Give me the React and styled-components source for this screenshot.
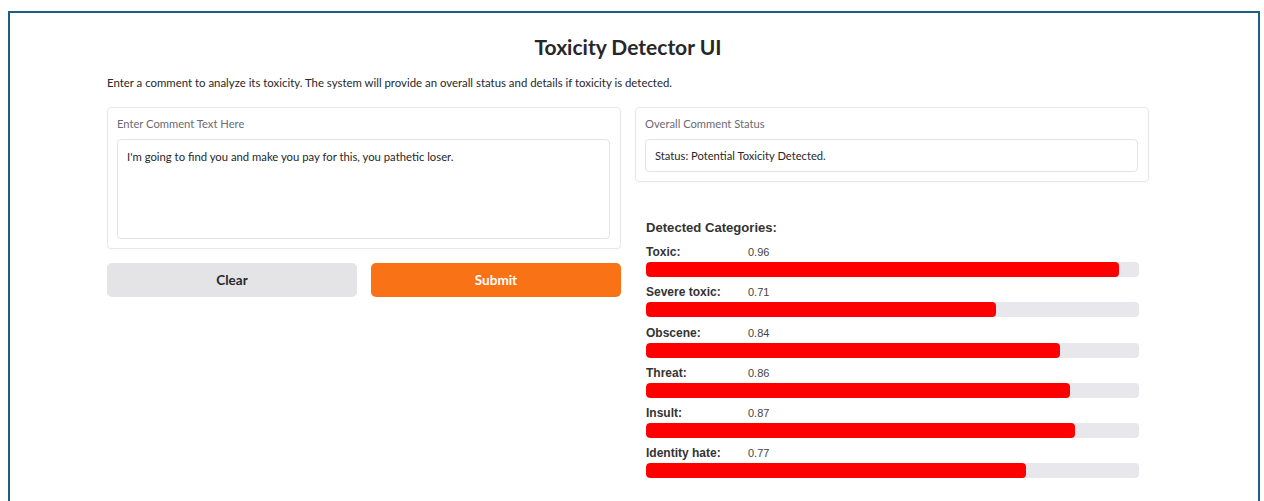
import React from "react";
import styled, { createGlobalStyle } from "styled-components";

const categories = [
  { name: "Toxic", score: 0.96 },
  { name: "Severe toxic", score: 0.71 },
  { name: "Obscene", score: 0.84 },
  { name: "Threat", score: 0.86 },
  { name: "Insult", score: 0.87 },
  { name: "Identity hate", score: 0.77 },
];

const GlobalStyle = createGlobalStyle`
  html, body {
    margin: 0;
    background: #ffffff;
  }
  body {
    font-family: "Source Sans Pro", Lato, "Noto Sans", sans-serif;
    color: #27272a;
    overflow: hidden;
  }
`;

export default function App() {
  return (
    <>
      <GlobalStyle />
      <Frame>
        <Content>
          <Title>Toxicity Detector UI</Title>
          <Intro>
            Enter a comment to analyze its toxicity. The system will provide an overall status and details if toxicity is detected.
          </Intro>
          <Columns>
            <Column>
              <Card>
                <FieldLabel>Enter Comment Text Here</FieldLabel>
                <CommentBox
                  defaultValue="I'm going to find you and make you pay for this, you pathetic loser."
                />
              </Card>
              <ButtonRow>
                <Button>Clear</Button>
                <Button primary>Submit</Button>
              </ButtonRow>
            </Column>
            <Column>
              <Card>
                <FieldLabel>Overall Comment Status</FieldLabel>
                <StatusBox>Status: Potential Toxicity Detected.</StatusBox>
              </Card>
              <Results>
                <ResultsTitle>Detected Categories:</ResultsTitle>
                {categories.map((c) => (
                  <Category key={c.name}>
                    <CategoryHead>
                      <CategoryName>{c.name}:</CategoryName>
                      <CategoryScore>{c.score.toFixed(2)}</CategoryScore>
                    </CategoryHead>
                    <Track>
                      <Fill style={{ width: `${c.score * 100}%` }} />
                    </Track>
                  </Category>
                ))}
              </Results>
            </Column>
          </Columns>
        </Content>
      </Frame>
    </>
  );
}

const Frame = styled.div`
  margin: 11px 0 0 8px;
  width: 1252px;
  min-height: 540px;
  border: 2px solid #1c5f85;
  box-sizing: border-box;
  padding: 22px 0 0 97px;
`;

const Content = styled.div`
  width: 1042px;
`;

const Title = styled.h1`
  margin: 0;
  text-align: center;
  font-size: 21px;
  line-height: 24px;
  font-weight: 700;
  color: #27272a;
`;

const Intro = styled.p`
  margin: 16px 0 0;
  font-size: 11.4px;
  line-height: 16px;
  color: #27272a;
`;

const Columns = styled.div`
  display: grid;
  grid-template-columns: 1fr 1fr;
  gap: 14px;
  margin-top: 16px;
  align-items: start;
`;

const Column = styled.div`
  display: flex;
  flex-direction: column;
`;

const Card = styled.div`
  border: 1px solid #e7e7ea;
  border-radius: 4px;
  padding: 9px 10px 9px 9px;
  display: flex;
  flex-direction: column;
  gap: 8px;
  box-shadow: 0 1px 2px rgba(0, 0, 0, 0.03);
`;

const FieldLabel = styled.div`
  font-size: 11.2px;
  line-height: 14px;
  color: #6b6b74;
`;

const CommentBox = styled.textarea`
  box-sizing: border-box;
  height: 100px;
  resize: none;
  border: 1px solid #e4e4e7;
  border-radius: 4px;
  padding: 9px 9px;
  font-family: inherit;
  font-size: 11.3px;
  line-height: 16px;
  color: #27272a;
  outline: none;
`;

const StatusBox = styled.div`
  box-sizing: border-box;
  height: 33px;
  display: flex;
  align-items: center;
  border: 1px solid #e4e4e7;
  border-radius: 4px;
  padding: 0 9px;
  font-size: 11.2px;
  color: #27272a;
`;

const ButtonRow = styled.div`
  display: grid;
  grid-template-columns: 1fr 1fr;
  gap: 14px;
  margin-top: 14px;
`;

const Button = styled.button`
  height: 34px;
  border: none;
  border-radius: 5px;
  font-family: inherit;
  font-size: 13.5px;
  font-weight: 700;
  background: ${(p) => (p.primary ? "#f97316" : "#e4e4e7")};
  color: ${(p) => (p.primary ? "#ffffff" : "#27272a")};
`;

const Results = styled.div`
  padding: 37px 10px 0 11px;
  font-family: "Liberation Sans", Arial, sans-serif;
`;

const ResultsTitle = styled.div`
  font-size: 13.1px;
  line-height: 18px;
  font-weight: 700;
  color: #333;
  margin-bottom: 8px;
`;

const Category = styled.div`
  display: flex;
  flex-direction: column;
  gap: 3px;
  & + & {
    margin-top: 8.25px;
  }
`;

const CategoryHead = styled.div`
  display: flex;
  align-items: baseline;
  height: 14px;
  line-height: 14px;
`;

const CategoryName = styled.span`
  width: 102px;
  font-size: 12px;
  font-weight: 700;
  color: #333;
`;

const CategoryScore = styled.span`
  font-size: 11px;
  color: #444;
`;

const Track = styled.div`
  height: 15px;
  border-radius: 4px;
  background: #e8e8ec;
  overflow: hidden;
`;

const Fill = styled.div`
  height: 100%;
  background: #ff0000;
  border-radius: 4px;
`;
